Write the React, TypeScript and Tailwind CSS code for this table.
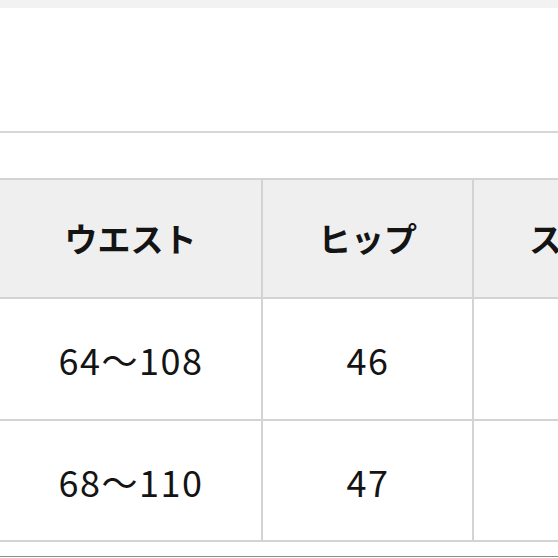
import React from "react";

const font = { fontFamily: '"Noto Sans CJK JP", "Noto Sans", sans-serif' };

function Row({ cells, header, h }: { cells: string[]; header?: boolean; h: string }) {
  const widths = ["w-[263px]", "w-[211px]", "w-[211px]"];
  return (
    <div className={`flex ${h}`}>
      {cells.map((c, i) => (
        <div
          key={i}
          className={`${widths[i]} shrink-0 flex items-center justify-center border-r-2 border-b-2 border-[#d3d3d3] ${
            header ? "bg-[#efefef] font-bold text-[33px]" : "bg-white text-[36px] tracking-[1.5px] pl-[1px]"
          } text-[#141414]`}
        >
          {c}
        </div>
      ))}
    </div>
  );
}

export default function App() {
  return (
    <div className="w-[558px] h-[558px] bg-white overflow-hidden flex flex-col" style={font}>
      <div className="h-[8px] bg-[#f2f2f2] shrink-0" />
      <div className="h-[123px] shrink-0" />
      <div className="h-[2px] bg-[#d6d6d6] shrink-0" />
      <div className="h-[45px] shrink-0" />
      <div className="border-t-2 border-[#d3d3d3] w-[700px] shrink-0">
        <Row header h="h-[119px]" cells={["ウエスト", "ヒップ", "スソ幅"]} />
        <Row h="h-[122px]" cells={["64～108", "46", ""]} />
        <Row h="h-[121px]" cells={["68～110", "47", ""]} />
      </div>
      <div className="h-[14px] shrink-0" />
      <div className="h-px bg-[#8c8c8c] shrink-0" />
    </div>
  );
}
